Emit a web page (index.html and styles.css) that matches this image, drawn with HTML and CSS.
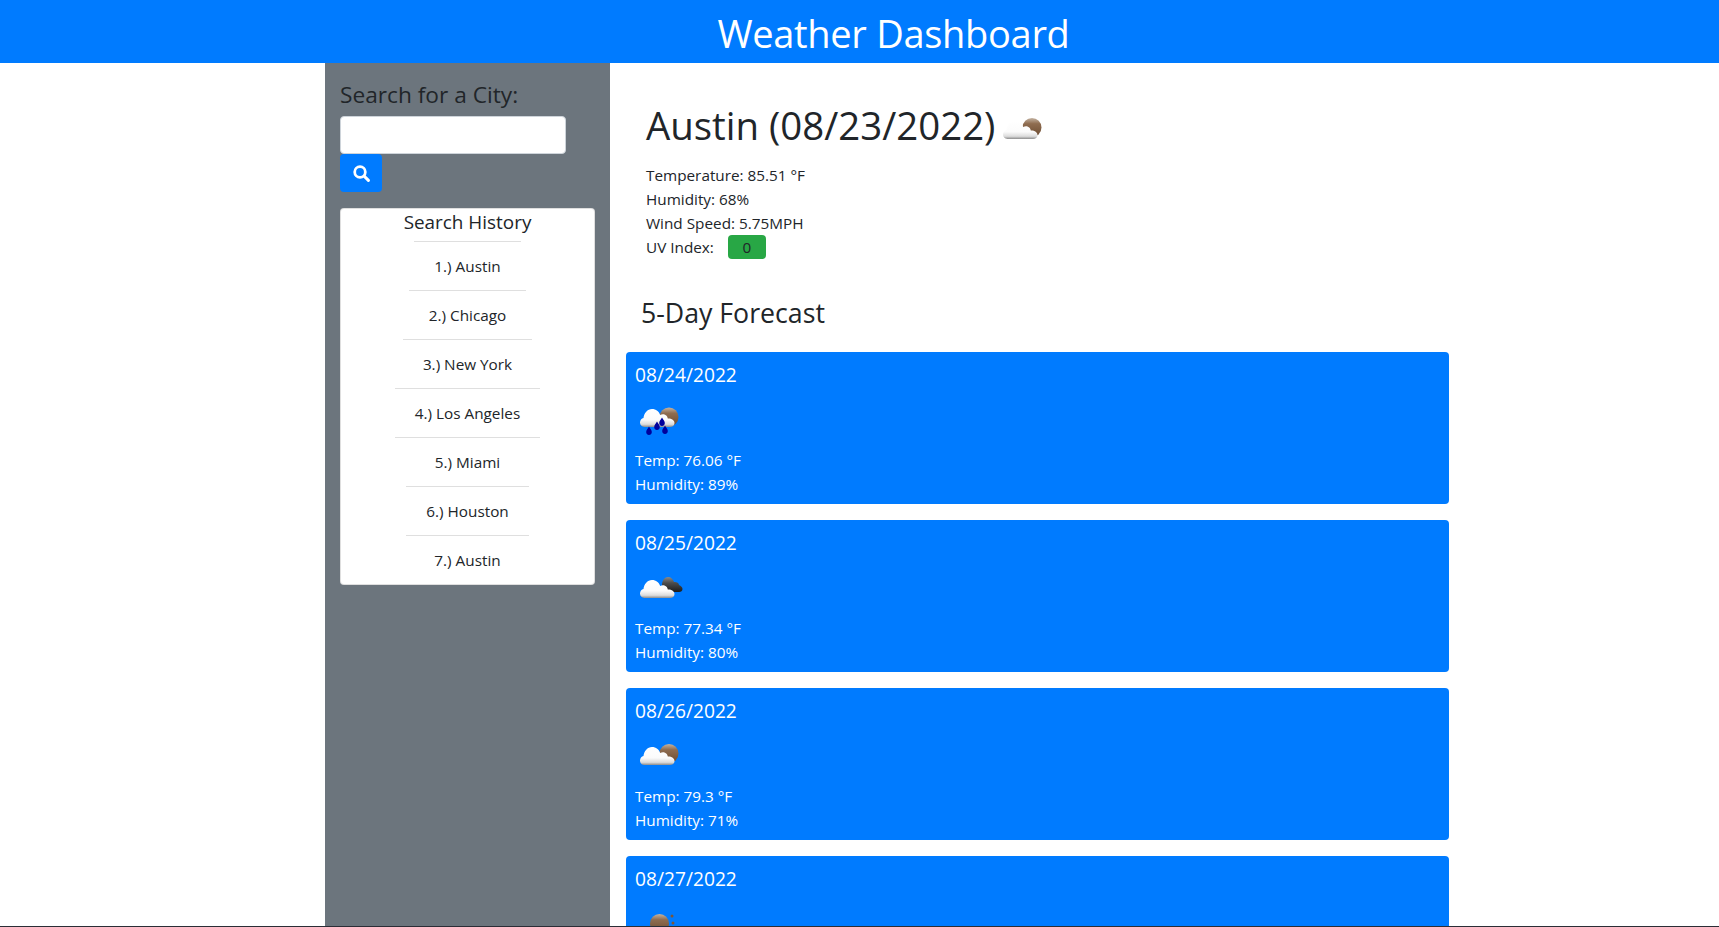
FILE: index.html
```html
<!DOCTYPE html>
<html lang="en">
<head>
  <meta charset="UTF-8">
  <meta name="viewport" content="width=device-width, initial-scale=1.0">
  <title>Weather Dashboard</title>
  <link rel="stylesheet" href="styles.css">
</head>
<body>
  <svg class="defs" width="0" height="0" aria-hidden="true">
    <defs>
      <linearGradient id="cloud" x1="0" y1="0" x2="0" y2="1">
        <stop offset="0" stop-color="#ffffff"/>
        <stop offset="0.6" stop-color="#fbfbfb"/>
        <stop offset="0.85" stop-color="#dcdcdc"/>
        <stop offset="1" stop-color="#8d8d8d"/>
      </linearGradient>
      <linearGradient id="sun" x1="0" y1="0" x2="0" y2="1">
        <stop offset="0" stop-color="#c4b3a2"/>
        <stop offset="0.3" stop-color="#8f6d50"/>
        <stop offset="1" stop-color="#6b4a30"/>
      </linearGradient>
      <linearGradient id="dark" x1="0" y1="0" x2="0" y2="1">
        <stop offset="0" stop-color="#8a8a8a"/>
        <stop offset="0.4" stop-color="#4c4c4c"/>
        <stop offset="1" stop-color="#1c1c1c"/>
      </linearGradient>
      <path id="cloud-shape" d="M9.500 36C6.500 36 5 33.800 5 31.500C5 29.200 6.500 27.500 8.500 27C9 22 12.500 18 17 18C21 18 24 20.500 25.200 24C26.500 23.300 28 23 29.500 23.500C31.500 24.200 32.500 25.700 32.800 27.500C36.500 27.300 39.500 29.300 39.500 32C39.500 34.500 37.500 36 35 36Z"/>
      <path id="drop" d="M0-4.500c1.500 2.500 2.800 3.800 2.800 5.600a2.800 2.800 0 0 1-5.600 0c0-1.800 1.300-3.100 2.800-5.600z"/>
    </defs>
  </svg>

  <header class="page-header">Weather Dashboard</header>

  <div class="layout">
    <aside class="sidebar">
      <h4 class="search-label">Search for a City:</h4>
      <input class="search-input" type="text" aria-label="City">
      <button class="search-btn" aria-label="Search">
        <svg width="17" height="17" viewBox="0 0 16 16">
          <circle cx="6.600" cy="6.600" r="5" fill="none" stroke="#fff" stroke-width="2.600"/>
          <path d="M10.500 10.500l4 4" stroke="#fff" stroke-width="2.800" stroke-linecap="round"/>
        </svg>
      </button>
      <div class="history">
        <h5 class="history-title">Search History</h5>
        <ul class="history-list">
          <li class="history-item">1.) Austin</li>
          <li class="history-item">2.) Chicago</li>
          <li class="history-item">3.) New York</li>
          <li class="history-item">4.) Los Angeles</li>
          <li class="history-item">5.) Miami</li>
          <li class="history-item">6.) Houston</li>
          <li class="history-item">7.) Austin</li>
        </ul>
      </div>
    </aside>

    <main class="content">
      <section class="today">
        <h1 class="city-title">Austin (08/23/2022)<svg class="icon" viewBox="0 0 50 50">
            <circle cx="34" cy="24.500" r="9.500" fill="url(#sun)"/>
            <use href="#cloud-shape" fill="url(#cloud)"/>
          </svg></h1>
        <p class="stat">Temperature: 85.51 °F</p>
        <p class="stat">Humidity: 68%</p>
        <p class="stat">Wind Speed: 5.75MPH</p>
        <p class="stat">UV Index: <span class="uv-badge">0</span></p>
      </section>

      <h3 class="forecast-title">5-Day Forecast</h3>

      <div class="card">
        <h5 class="card-date">08/24/2022</h5>
        <svg class="icon" viewBox="0 0 50 50">
          <circle cx="34" cy="24" r="9.500" fill="url(#sun)"/>
          <use href="#cloud-shape" fill="url(#cloud)" y="-2"/>
          <use href="#drop" x="27" y="29" fill="#00009c"/>
          <use href="#drop" x="22" y="33" fill="#00009c"/>
          <use href="#drop" x="30" y="37" fill="#00009c"/>
          <use href="#drop" x="14" y="38" fill="#00009c"/>
        </svg>
        <p class="stat">Temp: 76.06 °F</p>
        <p class="stat">Humidity: 89%</p>
      </div>

      <div class="card">
        <h5 class="card-date">08/25/2022</h5>
        <svg class="icon" viewBox="0 0 50 50">
          <path d="M27 24C27 19 30 16 33 16C36 16 38 18 39 21C41 20.500 44 21.500 44 24C46 24.500 47.500 26.500 47.500 28C47.500 30 46 31 44 31H30Z" fill="url(#dark)"/>
          <use href="#cloud-shape" fill="url(#cloud)" y="1"/>
        </svg>
        <p class="stat">Temp: 77.34 °F</p>
        <p class="stat">Humidity: 80%</p>
      </div>

      <div class="card">
        <h5 class="card-date">08/26/2022</h5>
        <svg class="icon" viewBox="0 0 50 50">
          <circle cx="34" cy="24.500" r="9.500" fill="url(#sun)"/>
          <use href="#cloud-shape" fill="url(#cloud)"/>
        </svg>
        <p class="stat">Temp: 79.3 °F</p>
        <p class="stat">Humidity: 71%</p>
      </div>

      <div class="card">
        <h5 class="card-date">08/27/2022</h5>
        <svg class="icon" viewBox="0 0 50 50">
          <circle cx="24.500" cy="26.500" r="9.500" fill="url(#sun)"/>
          <circle cx="37" cy="19" r="1.500" fill="#7a563a"/>
          <circle cx="38" cy="26" r="1.500" fill="#7a563a"/>
        </svg>
      </div>
    </main>
  </div>
</body>
</html>
```

FILE: styles.css
```css
* {
  box-sizing: border-box;
}
html, body {
  height: 100%;
}
body {
  margin: 0;
  display: flex;
  flex-direction: column;
  overflow: hidden;
  font-family: "Open Sans", "Noto Sans", Arial, sans-serif;
  font-size: 15.3px;
  line-height: 24px;
  color: #212529;
  background: #fff;
  border-bottom: 1px solid #2b2d36;
}
.defs {
  position: absolute;
}
h1, h3, h4, h5, p, ul {
  margin: 0;
  padding: 0;
  font-weight: 400;
}
.page-header {
  height: 63px;
  flex: none;
  background: #007bff;
  color: #fff;
  font-size: 38px;
  letter-spacing: -0.3px;
  line-height: 48px;
  padding: 9px 0 0 68px;
  text-align: center;
}
.layout {
  flex: 1;
  min-height: 0;
  width: 1140px;
  margin-left: 325px;
  display: flex;
  overflow: hidden;
}
.sidebar {
  width: 285px;
  flex: none;
  padding: 16px 15px;
  background: #6c757d;
}
.search-label {
  font-size: 22.7px;
  line-height: 32px;
  margin-bottom: 5px;
}
.search-input {
  display: block;
  width: 226px;
  height: 38px;
  border: 1px solid #ced4da;
  border-radius: 4px;
  background: #fff;
}
.search-btn {
  display: flex;
  align-items: center;
  justify-content: center;
  width: 42px;
  height: 38px;
  padding: 0;
  border: none;
  border-radius: 4px;
  background: #007bff;
}
.history {
  width: 255px;
  margin-top: 16px;
  background: #fff;
  border: 1px solid rgba(0, 0, 0, 0.125);
  border-radius: 4px;
  text-align: center;
}
.history-title {
  font-size: 18.9px;
  line-height: 26px;
  margin-bottom: 6px;
}
.history-list {
  list-style: none;
  display: flex;
  flex-direction: column;
  align-items: center;
}
.history-item {
  padding: 12px 20px;
  margin-bottom: -1px;
  border-top: 1px solid #dfdfdf;
  border-bottom: 1px solid #dfdfdf;
}
.history-item:last-child {
  margin-bottom: 0;
  border-bottom: none;
}
.content {
  flex: 1;
  padding: 0 16px;
}
.today {
  padding: 38px 20px 0;
}
.city-title {
  font-size: 38.4px;
  line-height: 48px;
  margin-bottom: 10px;
}
.city-title .icon {
  margin-left: 3px;
  vertical-align: -13px;
}
.uv-badge {
  display: inline-block;
  width: 38px;
  height: 24px;
  margin-left: 10px;
  border-radius: 4px;
  background: #28a745;
  text-align: center;
}
.forecast-title {
  font-size: 26.7px;
  line-height: 34px;
  margin: 37px 0 22px 15px;
}
.card {
  height: 152px;
  margin-bottom: 16px;
  padding: 9px 9px;
  border-radius: 4px;
  background: #007bff;
  color: #fff;
}
.card-date {
  font-size: 19.2px;
  line-height: 28px;
  margin-bottom: 4px;
}
.icon {
  display: inline-block;
  width: 50px;
  height: 50px;
}
.card .icon {
  display: block;
  margin: 0 0 5px 0;
}
```
